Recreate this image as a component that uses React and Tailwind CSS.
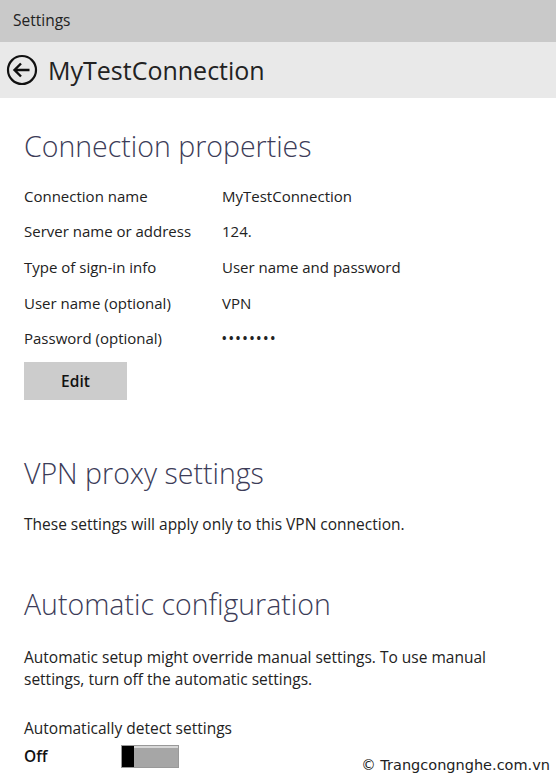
import React from "react";

const font = { fontFamily: '"Segoe UI", "Open Sans", "Noto Sans", sans-serif' };

function Row({ label, value, dots }) {
  return (
    <div className="flex h-[35.7px] items-center text-[15px] text-[#222]">
      <div className="w-[198px]">{label}</div>
      <div className={dots ? "text-[12px] tracking-[2.4px] font-bold" : ""}>{value}</div>
    </div>
  );
}

export default function App() {
  return (
    <div className="w-[556px] h-[783px] bg-white overflow-hidden relative" style={font}>
      <div className="h-[42px] bg-[#c9c9c9] flex items-center pl-[13px] text-[15.5px] text-[#222]">Settings</div>
      <div className="h-[56px] bg-[#e9e9e9] flex items-center pl-[6px]">
        <svg width="32" height="32" viewBox="0 0 32 32" className="mr-[10px]">
          <circle cx="16" cy="16" r="14" fill="none" stroke="#111" strokeWidth="2.2" />
          <path d="M8.5 16 H23.5 M15 9.5 L8.5 16 L15 22.5" fill="none" stroke="#111" strokeWidth="2.4" strokeLinejoin="miter" />
        </svg>
        <div className="text-[25px] text-[#222] leading-none">MyTestConnection</div>
      </div>
      <div className="pl-[24px]">
        <div className="pt-[28px] text-[28.5px] font-light text-[#3c3c58] leading-[40px]">Connection properties</div>
        <div className="mt-[12px]">
          <Row label="Connection name" value="MyTestConnection" />
          <Row label="Server name or address" value="124." />
          <Row label="Type of sign-in info" value="User name and password" />
          <Row label="User name (optional)" value="VPN" />
          <Row label="Password (optional)" value="••••••••" dots />
        </div>
        <div className="mt-[6px] w-[103px] h-[38px] bg-[#cccccc] flex items-center justify-center text-[15.5px] font-semibold text-[#111]">Edit</div>
        <div className="mt-[53px] text-[28.5px] font-light text-[#3c3c58] leading-[40px]">VPN proxy settings</div>
        <div className="mt-[20px] text-[15.5px] text-[#222]">These settings will apply only to this VPN connection.</div>
        <div className="mt-[47px] text-[28.5px] font-light text-[#3c3c58] leading-[40px]">Automatic configuration</div>
        <div className="mt-[22px] text-[15.5px] text-[#222] leading-[22px] w-[490px]">Automatic setup might override manual settings. To use manual settings, turn off the automatic settings.</div>
        <div className="mt-[27px] text-[15.5px] text-[#222]">Automatically detect settings</div>
        <div className="mt-[5px] flex items-center">
          <div className="w-[97px] text-[15.5px] font-semibold text-[#111]">Off</div>
          <div className="w-[58px] h-[23px] flex border border-[#999]">
            <div className="w-[12px] bg-black" />
            <div className="flex-1 bg-[#a6a6a6] border-t-2 border-[#d8d8d8]" />
          </div>
        </div>
      </div>
      <div className="absolute right-[6px] bottom-[6px] text-[14.5px] text-[#222]" style={{ fontFamily: '"DejaVu Sans", sans-serif' }}>© Trangcongnghe.com.vn</div>
    </div>
  );
}
